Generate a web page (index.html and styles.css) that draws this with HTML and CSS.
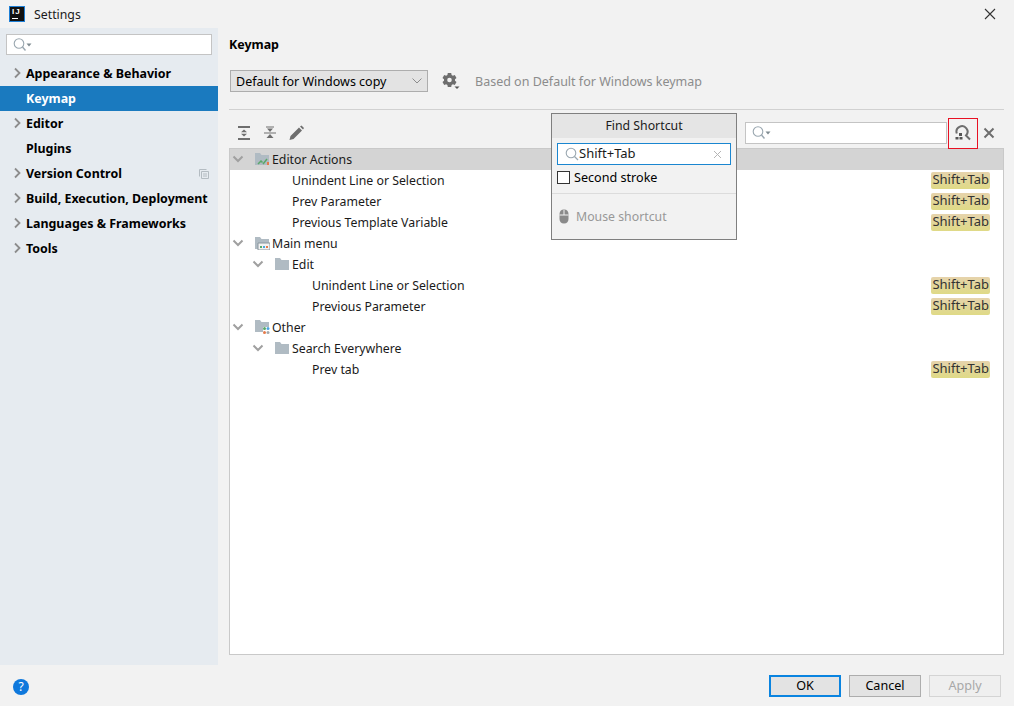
FILE: index.html
```html
<!DOCTYPE html>
<html lang="en">
<head>
  <title>Settings</title>
  <link rel="stylesheet" href="styles.css">
</head>
<body>

<svg class="defs" width="0" height="0">
  <symbol id="chev-right" viewBox="0 0 10 12"><path d="M3 1.500 7.500 6 3 10.500" fill="none" stroke="#8c8c8c" stroke-width="1.800"/></symbol>
  <symbol id="chev-down" viewBox="0 0 12 10"><path d="M1.500 2.500 6 7l4.500-4.500" fill="none" stroke="#a0a0a0" stroke-width="2"/></symbol>
  <symbol id="folder" viewBox="0 0 16 14"><path d="M1 1h5l1.500 2H15v10H1z" fill="#b0bbc3"/></symbol>
  <symbol id="search" viewBox="0 0 20 16">
    <circle cx="7" cy="6.500" r="4.800" fill="none" stroke="#9aa7b0" stroke-width="1.100"/>
    <path d="M10.500 10 13.500 13.500" stroke="#9aa7b0" stroke-width="1.400"/>
    <path d="M14.500 6.500h5l-2.500 3z" fill="#7f8b91"/>
  </symbol>
</svg>

<div class="window">
  <div class="titlebar">
    <div class="logo"><span class="logo-text">IJ</span><span class="logo-bar"></span></div>
    <span class="title">Settings</span>
    <svg class="win-close" width="12" height="12" viewBox="0 0 12 12"><path d="M1 1l10 10M11 1 1 11" stroke="#333" stroke-width="1.100"/></svg>
  </div>

  <div class="body">
    <!-- Left nav -->
    <div class="sidebar">
      <div class="side-search"><svg width="20" height="16"><use href="#search"/></svg></div>
      <div class="nav-item"><svg class="nav-chev" width="10" height="12"><use href="#chev-right"/></svg>Appearance &amp; Behavior</div>
      <div class="nav-item selected">Keymap</div>
      <div class="nav-item"><svg class="nav-chev" width="10" height="12"><use href="#chev-right"/></svg>Editor</div>
      <div class="nav-item">Plugins</div>
      <div class="nav-item"><svg class="nav-chev" width="10" height="12"><use href="#chev-right"/></svg>Version Control
        <svg class="nav-copy" width="10" height="10" viewBox="0 0 10 10"><path d="M.5 7.500V.5h7M2.500 2.500h7v7h-7zM4 5h4M4 7h4" fill="none" stroke="#b4bcc2"/></svg>
      </div>
      <div class="nav-item"><svg class="nav-chev" width="10" height="12"><use href="#chev-right"/></svg>Build, Execution, Deployment</div>
      <div class="nav-item"><svg class="nav-chev" width="10" height="12"><use href="#chev-right"/></svg>Languages &amp; Frameworks</div>
      <div class="nav-item"><svg class="nav-chev" width="10" height="12"><use href="#chev-right"/></svg>Tools</div>
    </div>

    <!-- Keymap panel -->
    <div class="main">
      <h2 class="heading">Keymap</h2>
      <div class="scheme-row">
        <div class="combo">
          <span>Default for Windows copy</span>
          <svg width="10" height="6" viewBox="0 0 10 6"><path d="M.5.5 5 5 9.500.5" fill="none" stroke="#8c8c8c"/></svg>
        </div>
        <svg class="gear" width="18" height="18" viewBox="0 0 18 18">
          <path d="M5.800 1h3.400l.4 2 1.300.7 1.900-.7 1.700 2.900-1.500 1.300v1.600l1.500 1.300-1.700 2.900-1.900-.7-1.300.7-.4 2H5.800l-.4-2-1.300-.7-1.900.7L.5 10.100 2 8.800V7.200L.5 5.900l1.700-2.900 1.900.7 1.300-.7z" fill="#6e6e6e"/>
          <circle cx="7.500" cy="8" r="2.300" fill="#f2f2f2"/>
          <path d="M12.500 14.500h5l-2.500 2.500z" fill="#555"/>
        </svg>
        <span class="based">Based on Default for Windows keymap</span>
      </div>

      <div class="toolbar">
        <svg class="tool" width="16" height="16" viewBox="0 0 16 16"><path d="M2 1h12v2H2zM2 13h12v2H2z" fill="#6e6e6e"/><path d="M8 4.500l3 2.800H5zM8 11.500l-3-2.800h6z" fill="#6e6e6e"/></svg>
        <svg class="tool" width="16" height="16" viewBox="0 0 16 16"><path d="M4 1.500h8v1H4zM2 7.500h12v1H2z" fill="#6e6e6e"/><path d="M8 7 5 3.500h6zM8 9l3.500 4h-7z" fill="#6e6e6e"/></svg>
        <svg class="tool" width="16" height="16" viewBox="0 0 16 16"><path d="M11 2.500l3 3L5.500 14l-4 1 1-4zM12 1.500 13.500.5l2.500 2.500-1 1.500z" fill="#6e6e6e"/></svg>
        <div class="filter"><svg width="20" height="16"><use href="#search"/></svg></div>
        <div class="find-btn">
          <svg width="18" height="18" viewBox="0 0 18 18">
            <path d="M2.800 8.500A5.500 5.500 0 1 1 12 10.500L16 14.500" fill="none" stroke="#6e6e6e" stroke-width="2"/>
            <path d="M5 8h3v3H5zM1.500 12h3v2.500h-3zM5.500 12h3v2.500h-3z" fill="#555"/>
          </svg>
        </div>
        <svg class="clear" width="12" height="12" viewBox="0 0 12 12"><path d="M1.500 1.500l9 9M10.500 1.500l-9 9" stroke="#6e6e6e" stroke-width="2"/></svg>
      </div>

      <div class="tree">
        <div class="row head">
          <svg class="chev" width="12" height="10"><use href="#chev-down"/></svg>
          <svg class="icon" width="16" height="14" viewBox="0 0 16 14"><path d="M1 1h5l1.500 2H15v10H1z" fill="#b0bbc3"/><path d="M4 12l3-3 1.500 1.500" fill="none" stroke="#59a869" stroke-width="1.500"/><path d="M9 12l4-5" stroke="#59a869" stroke-width="1.500"/><path d="M13 10h2v3h-2z" fill="#e57a4a"/></svg>
          <span>Editor Actions</span>
        </div>
        <div class="row leaf1"><span>Unindent Line or Selection</span><span class="key">Shift+Tab</span></div>
        <div class="row leaf1"><span>Prev Parameter</span><span class="key">Shift+Tab</span></div>
        <div class="row leaf1"><span>Previous Template Variable</span><span class="key">Shift+Tab</span></div>
        <div class="row">
          <svg class="chev" width="12" height="10"><use href="#chev-down"/></svg>
          <svg class="icon" width="16" height="14" viewBox="0 0 16 14"><path d="M1 1h5l1.500 2H15v10H1z" fill="#b0bbc3"/><path d="M4 7h12v7H4z" fill="#f2f2f2" stroke="#8a969e"/><path d="M6 10h2v2H6z" fill="#59a869"/><path d="M9 10h2v2H9z" fill="#4aa5e0"/><path d="M12 10h2v2h-2z" fill="#e57a4a"/></svg>
          <span>Main menu</span>
        </div>
        <div class="row lvl1">
          <svg class="chev" width="12" height="10"><use href="#chev-down"/></svg>
          <svg class="icon" width="16" height="14"><use href="#folder"/></svg>
          <span>Edit</span>
        </div>
        <div class="row leaf2"><span>Unindent Line or Selection</span><span class="key">Shift+Tab</span></div>
        <div class="row leaf2"><span>Previous Parameter</span><span class="key">Shift+Tab</span></div>
        <div class="row">
          <svg class="chev" width="12" height="10"><use href="#chev-down"/></svg>
          <svg class="icon" width="16" height="16" viewBox="0 0 16 16"><path d="M1 1h5l1.500 2H15v5H9v5H1z" fill="#b0bbc3"/><circle cx="10.500" cy="9.500" r="1.500" fill="#59a869"/><circle cx="14" cy="9.500" r="1.500" fill="#4aa5e0"/><circle cx="10.500" cy="13.500" r="1.500" fill="#e57a4a"/><circle cx="14" cy="13.500" r="1.500" fill="#a0a8ae"/></svg>
          <span>Other</span>
        </div>
        <div class="row lvl1">
          <svg class="chev" width="12" height="10"><use href="#chev-down"/></svg>
          <svg class="icon" width="16" height="14"><use href="#folder"/></svg>
          <span>Search Everywhere</span>
        </div>
        <div class="row leaf2"><span>Prev tab</span><span class="key">Shift+Tab</span></div>
      </div>

      <!-- Find Shortcut popup -->
      <div class="popup">
        <div class="popup-title">Find Shortcut</div>
        <div class="popup-field">
          <svg width="14" height="14" viewBox="0 0 14 14"><circle cx="6" cy="6" r="4.800" fill="none" stroke="#9aa7b0" stroke-width="1.100"/><path d="M9.500 9.500 13 13" stroke="#9aa7b0" stroke-width="1.300"/></svg>
          <span class="popup-value">Shift+Tab</span>
          <svg class="popup-x" width="9" height="9" viewBox="0 0 9 9"><path d="M1 1l7 7M8 1 1 8" stroke="#b5b5b5"/></svg>
        </div>
        <label class="stroke"><span class="check"></span>Second stroke</label>
        <div class="popup-sep"></div>
        <div class="mouse">
          <svg width="10" height="15" viewBox="0 0 10 15"><path d="M5 .5C2 .5.5 2.500.5 5v5c0 2.500 1.500 4.500 4.500 4.500s4.500-2 4.500-4.500V5C9.500 2.500 8 .5 5 .5z" fill="#8a8a8a"/><path d="M.5 6h9M5 1v5" stroke="#f2f2f2"/></svg>
          <span>Mouse shortcut</span>
        </div>
      </div>
    </div>
  </div>

  <div class="footer">
    <div class="help">?</div>
    <div class="buttons">
      <div class="btn primary">OK</div>
      <div class="btn">Cancel</div>
      <div class="btn disabled">Apply</div>
    </div>
  </div>
</div>

</body>
</html>
```

FILE: styles.css
```css
* {
  box-sizing: border-box;
}

html, body {
  margin: 0;
  height: 100%;
}

body {
  background: #f2f2f2;
  color: #1a1a1a;
  font-family: "Noto Sans", "Open Sans", sans-serif;
  font-size: 12.3px;
  overflow: hidden;
}

.defs {
  position: absolute;
}

.window {
  width: 1014px;
  height: 706px;
  display: flex;
  flex-direction: column;
}

/* Title bar */
.titlebar {
  height: 28px;
  display: flex;
  align-items: center;
  padding: 0 18px 0 9px;
  flex-shrink: 0;
}

.logo {
  width: 16px;
  height: 16px;
  background: #111;
  border: 1px solid #1e7fd6;
  color: #fff;
  margin-right: 9px;
  display: flex;
  flex-direction: column;
  padding: 1px 2px 0;
}

.logo-text {
  font-family: "Liberation Sans", sans-serif;
  font-size: 8px;
  font-weight: 700;
  line-height: 8px;
  letter-spacing: 1px;
}

.logo-bar {
  width: 6px;
  height: 1px;
  background: #fff;
  margin-top: 2px;
}

.win-close {
  margin-left: auto;
  margin-bottom: 1px;
}

.body {
  flex: 1;
  display: flex;
  min-height: 0;
}

/* Sidebar */
.sidebar {
  width: 218px;
  background: #e6ebf0;
  padding-top: 6px;
}

.side-search {
  height: 21px;
  margin: 0 6px 6px;
  background: #fff;
  border: 1px solid #c4c4c4;
  padding: 2px 5px;
  display: flex;
  align-items: center;
}

.nav-item {
  height: 25px;
  padding: 0 0 1px 26px;
  display: flex;
  align-items: center;
  font-size: 12.45px;
  font-weight: 700;
  color: #000;
  position: relative;
}

.nav-item.selected {
  background: #1a7abf;
  color: #fff;
}

.nav-chev {
  position: absolute;
  left: 12px;
  top: 6px;
}

.nav-copy {
  position: absolute;
  left: 199px;
  top: 8px;
}

/* Main panel */
.main {
  flex: 1;
  padding: 0 10px 10px 11px;
  display: flex;
  flex-direction: column;
  position: relative;
  min-width: 0;
}

.heading {
  margin: 8px 0 0;
  font-size: 12.45px;
  font-weight: 700;
  line-height: 18px;
  color: #000;
}

.scheme-row {
  margin-top: 16px;
  padding: 0 0 17px 1px;
  border-bottom: 1px solid #d1d1d1;
  display: flex;
  align-items: center;
  box-sizing: content-box;
  height: 22px;
  font-size: 12.5px;
}

.combo {
  width: 198px;
  height: 22px;
  background: #e3e3e3;
  border: 1px solid #adadad;
  display: flex;
  align-items: center;
  justify-content: space-between;
  padding: 0 5px;
  color: #000;
}

.gear {
  margin-left: 14px;
}

.based {
  margin-left: 15px;
  color: #8c8c8c;
}

.toolbar {
  height: 38px;
  display: flex;
  align-items: center;
  padding: 8px 0 0 7px;
}

.tool {
  margin-right: 10px;
}

.filter {
  width: 202px;
  height: 22px;
  margin-left: auto;
  margin-right: 1px;
  background: #fff;
  border: 1px solid #c4c4c4;
  padding: 0 5px;
  display: flex;
  align-items: center;
}

.find-btn {
  width: 30px;
  height: 31px;
  align-self: flex-start;
  border: 1px solid #e81123;
  display: flex;
  align-items: center;
  justify-content: center;
  position: relative;
  z-index: 1;
}

.clear {
  margin: 0 9px 0 5px;
}

/* Tree */
.tree {
  flex: 1;
  background: #fff;
  border: 1px solid #c9c9c9;
}

.row {
  height: 21px;
  display: flex;
  align-items: center;
  padding: 0 13px 1px 0;
}

.row.head {
  background: #d4d4d4;
}

.row.lvl1 {
  padding-left: 20px;
}

.row.leaf1 {
  padding-left: 62px;
}

.row.leaf2 {
  padding-left: 82px;
}

.chev {
  margin: 0 10px 0 2px;
  flex-shrink: 0;
}

.icon {
  margin-right: 2px;
  flex-shrink: 0;
}

.key {
  margin: 1px 0 0 auto;
  height: 17px;
  line-height: 15px;
  padding: 0 1px;
  font-size: 13px;
  background: linear-gradient(#e6d3ac, #dfda86);
  border-radius: 2px;
  color: #333;
}

/* Popup */
.popup {
  position: absolute;
  left: 333px;
  top: 85px;
  width: 186px;
  height: 127px;
  background: #f2f2f2;
  border: 1px solid #7f7f7f;
  display: flex;
  flex-direction: column;
}

.popup-title {
  height: 24px;
  background: #e5e5e5;
  line-height: 24px;
  text-align: center;
}

.popup-field {
  height: 22px;
  margin: 5px 5px 0;
  background: #fff;
  border: 1px solid #1a86d0;
  display: flex;
  align-items: center;
  padding: 0 8px 0 7px;
}

.popup-value {
  font-size: 13px;
  line-height: 18px;
  margin-bottom: 3px;
}

.popup-x {
  margin-left: auto;
}

.stroke {
  display: flex;
  align-items: center;
  margin: 2px 5px 0;
  height: 20px;
  font-size: 12.6px;
  color: #000;
}

.check {
  width: 13px;
  height: 13px;
  background: #fff;
  border: 1px solid #333;
  margin-right: 4px;
}

.popup-sep {
  height: 1px;
  background: #dcdcdc;
  margin-top: 6px;
}

.mouse {
  display: flex;
  align-items: center;
  margin: 14px 0 0 7px;
  color: #989898;
}

.mouse svg {
  margin-right: 7px;
}

/* Footer */
.footer {
  height: 41px;
  flex-shrink: 0;
  display: flex;
  align-items: center;
  justify-content: space-between;
  padding: 1px 13px 0;
}

.help {
  width: 16px;
  height: 16px;
  margin-top: 2px;
  border-radius: 50%;
  background: #0f78dc;
  color: #fff;
  font-size: 12px;
  line-height: 16px;
  text-align: center;
}

.buttons {
  display: flex;
  gap: 8px;
}

.btn {
  width: 72px;
  height: 22px;
  background: #e3e3e3;
  border: 1px solid #adadad;
  font-size: 12.6px;
  line-height: 19px;
  text-align: center;
  color: #000;
}

.btn.primary {
  border: 2px solid #0a84e0;
  line-height: 17px;
}

.btn.disabled {
  background: #efefef;
  border-color: #d4d4d4;
  color: #a8a8a8;
}
```
